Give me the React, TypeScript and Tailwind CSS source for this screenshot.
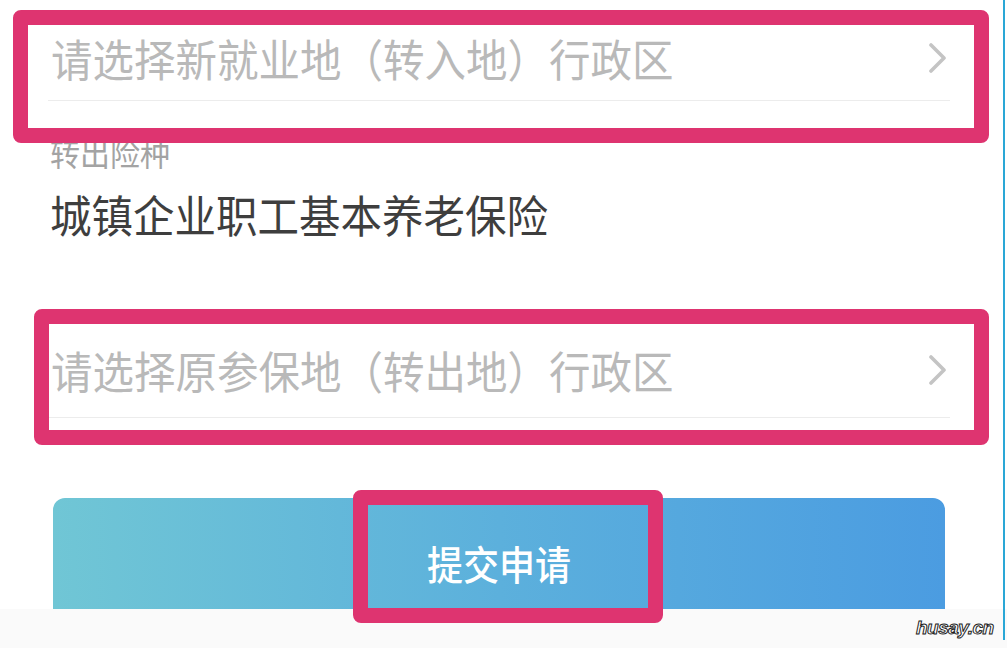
import React from "react";

const Chevron = () => (
  <svg width="22" height="30" viewBox="0 0 22 30" fill="none">
    <path d="M4 2 L17 15 L4 28" stroke="#c4c4c4" strokeWidth="3.6" strokeLinecap="round" strokeLinejoin="round" />
  </svg>
);

export default function App() {
  const font = "font-['Noto_Sans_CJK_SC','Noto_Sans',sans-serif]";
  return (
    <div className={`relative w-[1007px] h-[648px] overflow-hidden bg-white ${font}`}>
      <div className="flex flex-col h-full">
        <div className="ml-[48px] w-[902px] flex flex-col">
          {/* Row 1 */}
          <div className="flex items-center justify-between pt-[36px] pb-[20px] border-b border-[#ececec]">
            <span className="pl-[3px] text-[41.5px] leading-[44px] text-[#b9b9b9] inline-block scale-y-[1.08] origin-center">请选择新就业地（转入地）行政区</span>
            <span className="mr-[1px]"><Chevron /></span>
          </div>
          {/* Label */}
          <div className="mt-[36px] pl-[2px] text-[30px] leading-[30px] text-[#a3a3a3] scale-y-[1.08] origin-left">转出险种</div>
          <div className="mt-[25px] pl-[2px] text-[41.5px] leading-[44px] text-[#3e3e3e] scale-y-[1.08] origin-left">城镇企业职工基本养老保险</div>
          {/* Row 3 */}
          <div className="mt-[112px] flex items-center justify-between pb-[25px] border-b border-[#ececec]">
            <span className="pl-[3px] text-[41.5px] leading-[44px] text-[#b9b9b9] inline-block scale-y-[1.08] origin-center">请选择原参保地（转出地）行政区</span>
            <span className="mr-[1px]"><Chevron /></span>
          </div>
        </div>
        {/* Button */}
        <div className="mt-[80px] ml-[53px] w-[892px] h-[111px] rounded-t-[12px] bg-gradient-to-r from-[#70c6d5] via-[#5cb0dc] to-[#4b9ce1] flex items-center justify-center pt-[16px]">
          <span className="text-[36px] leading-[40px] font-medium text-white inline-block scale-y-[1.1]">提交申请</span>
        </div>
        <div className="flex-1 bg-[#fafafa]" />
      </div>

      {/* Right edge line */}
      <div className="absolute top-0 right-[2px] w-[2px] h-[640px] bg-[#2aa7d6]" />

      {/* Highlight boxes */}
      <div className="absolute left-[13px] top-[10px] w-[976px] h-[133px] border-[15px] border-[#de3470] rounded-[8px]" />
      <div className="absolute left-[34px] top-[309px] w-[955px] h-[136px] border-[15px] border-[#de3470] rounded-[8px]" />
      <div className="absolute left-[353px] top-[490px] w-[310px] h-[133px] border-[15px] border-[#de3470] rounded-[8px]" />

      {/* Watermark */}
      <div className="absolute left-[916px] top-[617px] text-[19px] leading-[22px] font-bold italic text-white font-['Liberation_Sans',sans-serif] [-webkit-text-stroke:1px_#222] tracking-[-0.5px]">
        husay.cn
      </div>
    </div>
  );
}
